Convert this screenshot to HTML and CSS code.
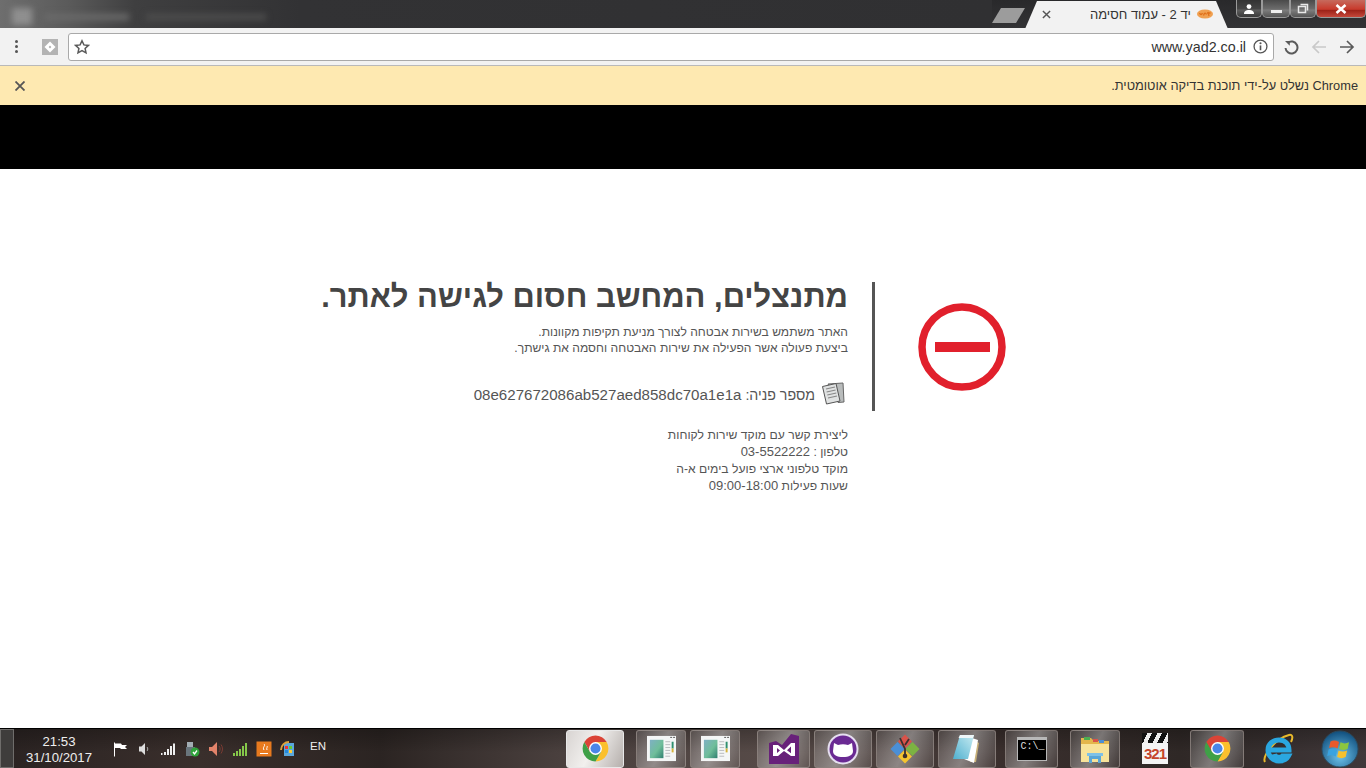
FILE: index.html
```html
<!DOCTYPE html>
<html lang="he">
<head>
<meta charset="utf-8">
<title>יד 2 - עמוד חסימה</title>
<link rel="stylesheet" href="styles.css">
</head>
<body>
<svg class="defs" width="0" height="0" aria-hidden="true">
  <symbol id="chrome" viewBox="0 0 48 48">
    <path fill="#db4437" d="M6.68 14A20 20 0 0 1 41.32 14H24L15.34 29Z"/>
    <path fill="#fbc02d" d="M41.32 14A20 20 0 0 1 24 44L32.66 29L24 14Z"/>
    <path fill="#3fa047" d="M24 44A20 20 0 0 1 6.68 14L15.34 29H32.66Z"/>
    <circle cx="24" cy="24" r="10" fill="#fff"/>
    <circle cx="24" cy="24" r="7.8" fill="#4a86e8"/>
  </symbol>
  <symbol id="doc" viewBox="0 0 34 30">
    <defs><linearGradient id="thumb" x1="0" y1="0" x2="1" y2="1"><stop offset="0" stop-color="#7fb0c4"/><stop offset=".55" stop-color="#6fbe9a"/><stop offset="1" stop-color="#2f7f70"/></linearGradient></defs>
    <path fill="#f4f6f6" d="M2 2h30v26H2z"/>
    <path fill="url(#thumb)" d="M5 6h14v19H5z"/>
    <path fill="none" stroke="#b8bcbf" d="M21 8h5M21 11h5M21 14h5M21 17h5M21 20h5M21 23h5"/>
    <path fill="#2f8f6f" d="M27.500 8h2v7h-2z"/>
    <path fill="#d6b23a" d="M27.500 15h2v4h-2z"/>
    <path fill="none" stroke="#555" stroke-dasharray="2 1" d="M26 3.500h6"/>
  </symbol>
</svg>

<header class="titlebar">
  <div class="blur-zone">
    <span class="blur b1"></span><span class="blur b2"></span><span class="blur b3"></span>
  </div>
  <div class="newtab"></div>
  <div class="tab">
    <svg class="tab-x" viewBox="0 0 10 10"><path d="M1 1l8 8M9 1l-8 8"/></svg>
    <span class="tab-title" dir="rtl">יד 2 - עמוד חסימה</span>
    <svg class="favicon" viewBox="0 0 16 10"><ellipse cx="8" cy="5" rx="8" ry="4.500" fill="#f0a050"/><path d="M2.500 4c1 2 2 2 3 0M6.500 6.500c1-3 2-3 3-1M11 3l1 4M10 4h3.500" stroke="#e0701a" stroke-width="1.300" fill="none"/></svg>
  </div>
  <div class="winbtns">
    <div class="wb wb-user"><svg viewBox="0 0 14 10" width="14" height="10"><circle cx="7" cy="2.600" r="2.400" fill="#fff"/><path d="M2 10c0-3 2-4 5-4s5 1 5 4z" fill="#fff"/></svg></div>
    <div class="wb wb-min"><span class="min-bar"></span></div>
    <div class="wb wb-max"><svg viewBox="0 0 12 11" width="12" height="11"><path d="M3.500 1.500h7v6M1.500 3.500h7v6h-7z" fill="none" stroke="#e8e8e8" stroke-width="1.500"/></svg></div>
    <div class="wb wb-close"><svg viewBox="0 0 14 10" width="14" height="10"><path d="M2.500 1l9 8M11.500 1l-9 8" stroke="#fff" stroke-width="2.600"/></svg></div>
  </div>
</header>

<nav class="toolbar">
  <div class="kebab"><i></i><i></i><i></i></div>
  <div class="ext"><svg viewBox="0 0 16 16" width="16" height="16"><rect width="16" height="16" fill="#b3b3b3"/><path d="M8 2.500L13.500 8L8 13.500L2.500 8Z" fill="#fff"/><circle cx="8" cy="8" r="1.200" fill="#bbb"/></svg></div>
  <div class="omnibox">
    <svg class="star" viewBox="0 0 16 16" width="16" height="16"><path d="M8 1.800l1.900 4.100 4.500.5-3.300 3 .9 4.400L8 11.600l-4 2.200.9-4.400-3.300-3 4.500-.5z" fill="none" stroke="#5a5a5a" stroke-width="1.500"/></svg>
    <span class="url">www.yad2.co.il</span>
    <svg class="info" viewBox="0 0 14 14" width="15" height="15"><circle cx="7" cy="7" r="6" fill="none" stroke="#555" stroke-width="1.200"/><path d="M7 6v4.500" stroke="#555" stroke-width="1.500"/><circle cx="7" cy="4" r="1" fill="#555"/></svg>
  </div>
  <svg class="nav-ic nav-reload" viewBox="0 0 16 16" width="16" height="16"><path d="M4.700 3.800A6 6 0 1 1 2.500 9" fill="none" stroke="#5a5a5a" stroke-width="2"/><path d="M2 2h4.800v4.800z" fill="#5a5a5a"/></svg>
  <svg class="nav-ic nav-back" viewBox="0 0 16 16" width="16" height="16"><path d="M15 8H2M8 2L2 8l6 6" fill="none" stroke="#c9c9c9" stroke-width="1.700"/></svg>
  <svg class="nav-ic nav-fwd" viewBox="0 0 16 16" width="16" height="16"><path d="M1 8h13M8 2l6 6-6 6" fill="none" stroke="#5a5a5a" stroke-width="1.700"/></svg>
</nav>

<div class="infobar">
  <svg class="info-x" viewBox="0 0 10 10" width="10" height="10"><path d="M.5.500l9 9M9.500.500l-9 9" stroke="#555" stroke-width="1.800"/></svg>
  <span class="info-text" dir="rtl">Chrome נשלט על-ידי תוכנת בדיקה אוטומטית.</span>
</div>

<div class="blackband"></div>

<main class="page">
  <section class="copy" dir="rtl">
    <h1>מתנצלים, המחשב חסום לגישה לאתר.</h1>
    <p class="lead">האתר משתמש בשירות אבטחה לצורך מניעת תקיפות מקוונות.<br>ביצעת פעולה אשר הפעילה את שירות האבטחה וחסמה את גישתך.</p>
    <div class="ref">
      <svg class="ref-ic" viewBox="0 0 24 24" width="24" height="24">
        <path d="M7 3l15-1 1 19-6 .5z" fill="#b9bcbc" stroke="#666"/>
        <path d="M1.500 5.500L15 2.500l4 17.500-13.500 3z" fill="#e0e2e2" stroke="#555"/>
        <path d="M5 8l9-2M5.600 11l9-2M6.300 14l9-2M7 17l9-2" stroke="#888" stroke-width="1.200"/>
      </svg>
      <span>מספר פניה: <span class="hash">08e627672086ab527aed858dc70a1e1a</span></span>
    </div>
    <p class="contact">ליצירת קשר עם מוקד שירות לקוחות<br>טלפון : <span class="num">03-5522222</span><br>מוקד טלפוני ארצי פועל בימים א-ה<br>שעות פעילות <span class="num">09:00-18:00</span></p>
  </section>
  <div class="rule"></div>
  <svg class="stop" viewBox="0 0 88 88" width="88" height="88"><circle cx="44" cy="44" r="40" fill="none" stroke="#e1202c" stroke-width="7.500"/><rect x="17" y="39" width="55" height="10" fill="#e1202c"/></svg>
</main>

<footer class="taskbar">
  <div class="showdesk"></div>
  <div class="clock"><span>21:53</span><span>31/10/2017</span></div>
  <div class="tray">
    <svg viewBox="0 0 16 16" width="16" height="16"><path d="M2.500 1.500v14" stroke="#fff"/><path d="M3 2.500h6l1 1.500h5l-2 2 2 2H9L8 7H3z" fill="#fff"/></svg>
    <svg viewBox="0 0 16 16" width="16" height="16"><path d="M3 5.500h2.500L9 2v12l-3.500-3.500H3z" fill="#ddd"/><path d="M11 6c1 1 1 3 0 4" stroke="#aaa" fill="none"/></svg>
    <svg viewBox="0 0 16 16" width="16" height="16"><path d="M1 12h1.500v2H1zM4 11h2v3H4zM7 8h2v6H7zM10 5h2v9h-2zM13 2.500h2V14h-2z" fill="#eee"/></svg>
    <svg viewBox="0 0 16 16" width="16" height="16"><rect x="3" y="1" width="6" height="6" fill="#a2adb3"/><rect x="2" y="6" width="9" height="9" fill="#69757c"/><circle cx="11" cy="11" r="4.500" fill="#2fa33a"/><path d="M9 11l1.500 2 2.500-3.500" stroke="#fff" fill="none" stroke-width="1.300"/></svg>
    <svg viewBox="0 0 16 16" width="16" height="16"><path d="M1 6h3l5-5v14l-5-5H1z" fill="#e2836a"/><path d="M11 5c1.500 2 1.500 4 0 6M13 3.500c2 3 2 6 0 9" stroke="#7c3a32" fill="none"/></svg>
    <svg viewBox="0 0 16 16" width="16" height="16"><path d="M1 12h2v3H1zM4 10h2v5H4zM7 8h2v7H7zM10 5h2v10h-2zM13 2h2v13h-2z" fill="#86c84a"/></svg>
    <svg viewBox="0 0 16 16" width="16" height="16"><rect x=".5" y=".5" width="15" height="15" fill="#e87a1e"/><path d="M4 12.500h8M8 3c2 2-2 3 0 6M11 5c1 1-1 2 0 4" stroke="#fff" fill="none"/></svg>
    <svg viewBox="0 0 16 16" width="16" height="16"><rect x="4" y="2" width="10" height="13" fill="#5aa7dc"/><path d="M5 5h3v3H5z" fill="#e33"/><path d="M9 5h3v3H9z" fill="#6c3"/><path d="M5 9h3v3H5z" fill="#28d"/><path d="M9 9h3v3H9z" fill="#fc3"/><path d="M1 9c0-5 4-8 8-8" stroke="#dba13a" stroke-width="2" fill="none"/></svg>
  </div>
  <span class="lang">EN</span>

  <div class="tb active tb-chrome1"><svg width="31" height="31"><use href="#chrome"/></svg></div>
  <div class="tb tb-win1"><svg width="33" height="29"><use href="#doc"/></svg></div>
  <div class="tb tb-win2"><svg width="33" height="29"><use href="#doc"/></svg></div>
  <div class="tb tb-vs">
    <svg viewBox="0 0 30 32" width="30" height="32"><path d="M0 10l7-2 6 4L22 1l8 2v28H0z" fill="#68217a"/><path d="M4 12l5 0 6 5 7-7 4 0v13h-4l-7-5-6 5H4z" fill="#fff"/><path d="M8 15v5l3-2.500zM22 13.500l-4 3.700 4 3z" fill="#68217a"/></svg>
  </div>
  <div class="tb tb-gh">
    <svg viewBox="0 0 32 32" width="32" height="32"><circle cx="16" cy="16" r="15.500" fill="#e6dff0"/><circle cx="16" cy="16" r="13.500" fill="#6a2a93"/><path d="M7 10l4 2c3-1 7-1 10 0l4-2 1 8c0 4-4 6-10 6s-10-2-10-6z" fill="#fff"/></svg>
  </div>
  <div class="tb tb-git">
    <svg viewBox="0 0 32 32" width="32" height="32"><path d="M16 1.500L23 8.500L16 15.500L9 8.500Z" fill="#d9534a"/><path d="M23.500 9L30.500 16L23.500 23L16.500 16Z" fill="#7cb342"/><path d="M8.500 9L15.500 16L8.500 23L1.500 16Z" fill="#4b8fd6"/><path d="M16 16.500L23 23.500L16 30.500L9 23.500Z" fill="#f4c430"/><path d="M11 5l5 11v6M20 6l-4 6" stroke="#3b3030" stroke-width="1.800" fill="none"/><circle cx="16" cy="23" r="2.300" fill="#3b3030"/></svg>
  </div>
  <div class="tb tb-note">
    <svg viewBox="0 0 30 30" width="30" height="30"><defs><linearGradient id="pad" x1="0" y1="1" x2="1" y2="0"><stop offset="0" stop-color="#4fb0cf"/><stop offset="1" stop-color="#c9ecf2"/></linearGradient></defs><path d="M22 6l5 3-3 19-6 0z" fill="#c8b078"/><path d="M20 4l6 2-4 23-10-4z" fill="#fff"/><path d="M8 1h14l-6 24H1z" fill="url(#pad)"/><path d="M8 1h14l-1 3H6.500z" fill="#eef6f8"/></svg>
  </div>
  <div class="tb tb-cmd"><div class="cmdwin"><span>C:\_</span></div></div>
  <div class="tb tb-folder">
    <svg viewBox="0 0 32 32" width="32" height="32"><path d="M2 5h10l3 3h15v20H2z" fill="#e4b64c"/><path d="M5 4h6v3H5z" fill="#4cae50"/><path d="M14 6h5v3h-5z" fill="#d9534a"/><path d="M20 7h5v3h-5z" fill="#4b8fd6"/><path d="M2 11h28v18H2z" fill="#f8e39a"/><path d="M10 23h12v7h-3v-4h-6v4h-3z" fill="#5ba6d6"/><path d="M8 20h16v3H8z" fill="#7fc1e6"/></svg>
  </div>
  <div class="tb plain tb-media">
    <div class="clap"><span class="clap-top"></span><span class="clap-num">321</span></div>
  </div>
  <div class="tb tb-chrome2"><svg width="31" height="31"><use href="#chrome"/></svg></div>
  <div class="tb plain tb-ie">
    <svg viewBox="0 0 32 32" width="32" height="32"><path d="M3 29C0 24 12 6 27 2c4-1 4 3 2 7" fill="none" stroke="#e8b92b" stroke-width="2"/><path d="M8 17h19c0-6-4-10-10-10S6 11 6 17s5 11 11 11c5 0 8-2 9.500-5h-6c-2 2-7 2-8-2" fill="none" stroke="#2aa7e0" stroke-width="5"/></svg>
  </div>
  <div class="tb plain tb-start">
    <svg viewBox="0 0 40 40" width="38" height="38"><defs><radialGradient id="orb" cx=".5" cy=".7" r=".7"><stop offset="0" stop-color="#6fc4ec"/><stop offset="1" stop-color="#0f4d7c"/></radialGradient></defs><circle cx="20" cy="20" r="19" fill="url(#orb)" stroke="#2b4a5e"/><path d="M10 12c3-1.500 6-1 9 .500l-1.500 7c-3-1.500-6-2-9-.500z" fill="#e8592c"/><path d="M20.500 13c3 1.500 6 1.500 9 0l-1.500 7c-3 1.500-6 1.500-9 0z" fill="#8cc63f"/><path d="M8 20.500c3-1.500 6-1 9 .500l-1.500 7c-3-1.500-6-2-9-.500z" fill="#3aa3e0"/><path d="M18.500 21.500c3 1.500 6 1.500 9 0l-1.500 7c-3 1.500-6 1.500-9 0z" fill="#f6c12e"/></svg>
  </div>
</footer>
</body>
</html>
```

FILE: styles.css
```css
* { box-sizing: border-box; }
html, body { margin: 0; padding: 0; }
body {
  width: 1366px;
  height: 768px;
  overflow: hidden;
  display: flex;
  flex-direction: column;
  font-family: "Liberation Sans", Arial, sans-serif;
  background: #fff;
}
.defs { position: absolute; }

/* Title bar */
.titlebar {
  height: 28px;
  flex: none;
  display: flex;
  align-items: flex-start;
  background: linear-gradient(#29292b, #333335);
  overflow: hidden;
}
.blur-zone {
  width: 993px;
  height: 28px;
  position: relative;
  background: linear-gradient(90deg, #6e6e6e 0, #5a5a5a 70px, #3f3f40 135px, #323234 300px, #303032 100%);
}
.blur { position: absolute; display: block; filter: blur(3px); }
.b1 { left: 12px; top: 8px; width: 20px; height: 17px; background: #8f8f8f; }
.b2 { left: 44px; top: 14px; width: 85px; height: 6px; background: #6b6b6b; }
.b3 { left: 146px; top: 14px; width: 120px; height: 6px; background: #4e4e4e; }
.newtab {
  width: 33px;
  height: 15px;
  margin-top: 8px;
  background: #9c9c9c;
  clip-path: polygon(9px 0, 33px 0, 24px 15px, 0 15px);
  flex: none;
}
.tab {
  width: 203px;
  height: 28px;
  margin-top: 1px;
  flex: none;
  display: flex;
  align-items: center;
  padding: 0 15px 2px 16px;
  background: #f2f2f2;
  clip-path: polygon(0 100%, 12px 0, 191px 0, 203px 100%);
  font-size: 13px;
  color: #333;
}
.tab-x { width: 9px; height: 9px; stroke: #555; stroke-width: 1.600; fill: none; flex: none; margin-left: 1px; }
.tab-title { flex: 1; text-align: right; padding-right: 6px; }
.favicon { width: 16px; height: 10px; flex: none; }
.winbtns { display: flex; margin-left: 8px; height: 18px; flex: none; }
.wb {
  height: 18px;
  display: flex;
  align-items: center;
  justify-content: center;
  border: 1px solid #9a9a9a;
  border-top: 0;
  border-radius: 0 0 5px 5px;
  background: linear-gradient(#4a4a4a, #6a6a6a 50%, #7c7c7c 60%, #555);
}
.wb-user { width: 26px; background: linear-gradient(#333, #444 50%, #5c5c5c 60%, #3a3a3a); }
.wb-min { width: 28px; }
.wb-max { width: 26px; }
.wb-close { width: 50px; background: linear-gradient(#c66a5d, #c8392b 55%, #9c2218 60%, #c4473a); }
.min-bar { width: 11px; height: 3px; background: #eee; margin-top: 5px; display: block; }

/* Toolbar */
.toolbar {
  height: 38px;
  flex: none;
  display: flex;
  align-items: center;
  background: #f2f2f2;
  border-bottom: 1px solid #b9b9b9;
  padding-left: 15px;
}
.kebab { width: 4px; display: flex; flex-direction: column; gap: 2px; flex: none; margin-top: -1px; }
.kebab i { width: 3px; height: 3px; background: #555; border-radius: 50%; display: block; }
.ext { width: 16px; height: 16px; margin-left: 23px; flex: none; }
.ext svg { display: block; }
.omnibox {
  width: 1206px;
  height: 28px;
  margin-left: 10px;
  flex: none;
  display: flex;
  align-items: center;
  background: #fff;
  border: 1px solid #a9a9a9;
  border-radius: 3px;
  padding: 0 5px 0 5px;
  font-size: 14.300px;
  color: #333;
}
.star { flex: none; }
.url { margin-left: auto; margin-right: 7px; }
.info { flex: none; }
.nav-ic { flex: none; }
.nav-reload { margin-left: 9px; }
.nav-back { margin-left: 12px; }
.nav-fwd { margin-left: 12px; }

/* Infobar */
.infobar {
  height: 39px;
  flex: none;
  display: flex;
  align-items: center;
  justify-content: space-between;
  background: #fee9b1;
  padding: 0 8px 0 15px;
  font-size: 12.800px;
  color: #333;
}
.blackband { height: 64px; flex: none; background: #000; }

/* Page */
.page {
  flex: 1;
  display: flex;
  align-items: flex-start;
  padding: 113px 0 0 300px;
  min-height: 0;
}
.copy { width: 548px; flex: none; color: #555; text-align: right; }
h1 { margin: 0; font-size: 30.900px; line-height: 30px; font-weight: 700; color: #444; }
.lead { margin: 12px 0 0; font-size: 12.100px; line-height: 16px; }
.ref { display: flex; align-items: center; gap: 6px; margin-top: 26px; padding-right: 3px; font-size: 14.200px; height: 24px; }
.ref-ic { flex: none; margin-top: -2px; }
.hash { font-size: 15.100px; }
.contact { margin: 21px 0 0; font-size: 12.150px; line-height: 16.900px; }
.num { font-size: 13px; }
.rule { width: 3px; height: 129px; background: #555; margin-left: 24px; flex: none; }
.stop { margin: 21px 0 0 43px; flex: none; }

/* Taskbar */
.taskbar {
  height: 40px;
  flex: none;
  display: flex;
  align-items: center;
  border-top: 1px solid #000;
  background:
    linear-gradient(rgba(0,0,0,.25), rgba(0,0,0,0) 60%),
    linear-gradient(90deg, #2a2322 0, #3a2f2c 200px, #2b2422 380px, #4a403e 560px, #574b48 780px, #3a2f2d 1000px, #2f2826 1180px, #40383a 1366px);
  color: #eee;
}
.showdesk { width: 14px; height: 39px; flex: none; background: #3f3d3c; border: 1px solid #6f6d6b; }
.clock { width: 90px; flex: none; display: flex; flex-direction: column; align-items: center; font-size: 13.200px; line-height: 16px; padding-top: 2px; }
.tray { display: flex; gap: 8px; margin-left: 8px; flex: none; align-items: center; }
.tray svg { display: block; flex: none; }
.lang { font-size: 11.500px; margin-left: 14px; width: 21px; flex: none; margin-top: -5px; }
.tb {
  height: 38px;
  flex: none;
  display: flex;
  align-items: center;
  justify-content: center;
  border: 1px solid rgba(150, 140, 135, .7);
  border-radius: 3px;
  background: linear-gradient(115deg, rgba(255,255,255,.12), rgba(255,255,255,.38) 50%, rgba(255,255,255,.08));
}
.tb.active { background: linear-gradient(115deg, #d8d4d2, #f2f0ee 45%, #b5afac); border-color: #e8e8e8; }
.tb.plain { background: none; border-color: transparent; }
.tb-chrome1 { width: 58px; margin-left: 235px; }
.tb-win1 { width: 50px; margin-left: 12px; }
.tb-win2 { width: 50px; margin-left: 4px; }
.tb-vs { width: 53px; margin-left: 17px; }
.tb-gh { width: 58px; margin-left: 4px; }
.tb-git { width: 58px; margin-left: 4px; }
.tb-note { width: 58px; margin-left: 4px; }
.tb-cmd { width: 53px; margin-left: 9px; }
.tb-folder { width: 50px; margin-left: 12px; }
.tb-media { width: 60px; margin-left: 5px; }
.tb-chrome2 { width: 54px; margin-left: 5px; }
.tb-ie { width: 55px; margin-left: 6px; }
.tb-start { width: 40px; margin-left: 15px; }
.cmdwin {
  width: 30px;
  height: 24px;
  background: #000;
  border: 1px solid #b8b8b8;
  border-top-width: 3px;
  color: #ddd;
  font: 10px/13px "Liberation Mono", monospace;
  padding-left: 3px;
  overflow: hidden;
}
.clap { width: 26px; height: 31px; display: flex; flex-direction: column; }
.clap-top { height: 10px; flex: none; display: block; background: repeating-linear-gradient(115deg, #111 0 5px, #eee 5px 9px); }
.clap-num { flex: 1; background: #f4f4f4; text-align: center; font: 700 15px/21px "Liberation Sans", sans-serif; color: #c5452c; letter-spacing: -1px; }
```
